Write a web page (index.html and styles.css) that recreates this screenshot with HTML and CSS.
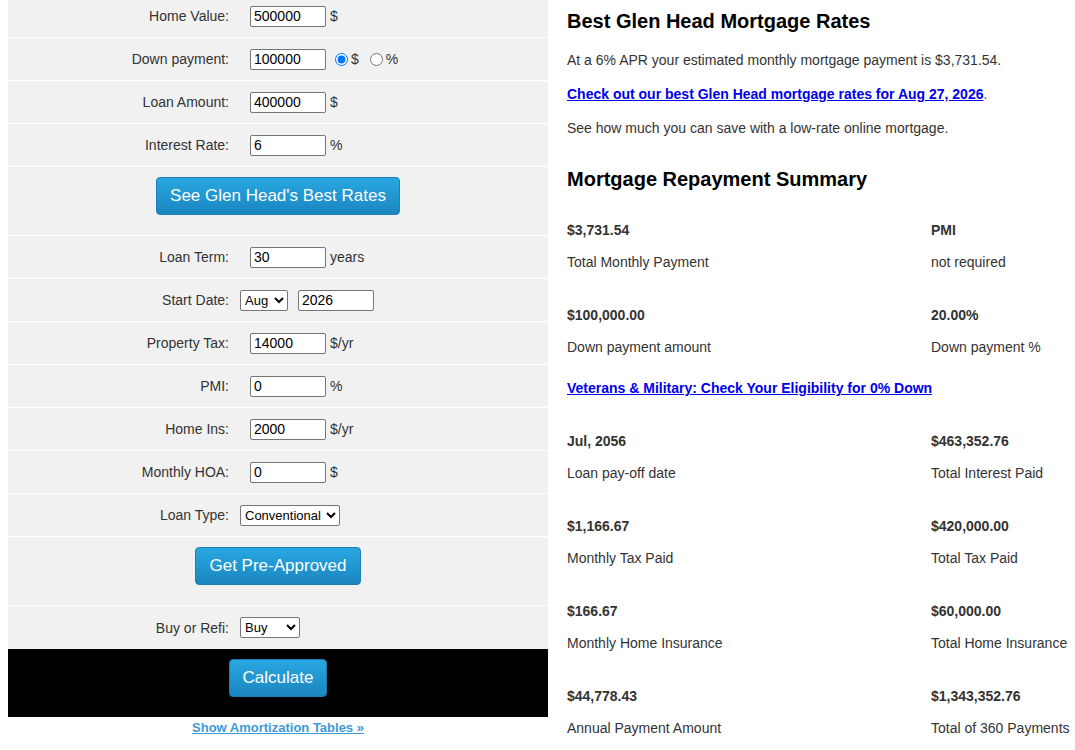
FILE: index.html
```html
<!DOCTYPE html>
<html lang="en">
<head>
<meta charset="utf-8">
<title>Glen Head Mortgage Calculator</title>
<link rel="stylesheet" href="styles.css">
</head>
<body>
<div class="page">
  <div class="calc">
    <form class="form">
      <div class="row first">
        <label class="lbl">Home Value:</label>
        <div class="val"><input class="txt" type="text" value="500000"><span class="unit">$</span></div>
      </div>
      <div class="row">
        <label class="lbl">Down payment:</label>
        <div class="val"><input class="txt" type="text" value="100000"><input class="radio" type="radio" name="dp" checked><span class="runit">$</span><input class="radio" type="radio" name="dp"><span class="runit">%</span></div>
      </div>
      <div class="row">
        <label class="lbl">Loan Amount:</label>
        <div class="val"><input class="txt" type="text" value="400000"><span class="unit">$</span></div>
      </div>
      <div class="row">
        <label class="lbl">Interest Rate:</label>
        <div class="val"><input class="txt" type="text" value="6"><span class="unit">%</span></div>
      </div>
      <div class="btnrow">
        <button type="button" class="btn">See Glen Head's Best Rates</button>
      </div>
      <div class="row">
        <label class="lbl">Loan Term:</label>
        <div class="val"><input class="txt" type="text" value="30"><span class="unit">years</span></div>
      </div>
      <div class="row">
        <label class="lbl">Start Date:</label>
        <div class="val"><select class="sel sel-month"><option>Aug</option></select><input class="txt" type="text" value="2026"></div>
      </div>
      <div class="row">
        <label class="lbl">Property Tax:</label>
        <div class="val"><input class="txt" type="text" value="14000"><span class="unit">$/yr</span></div>
      </div>
      <div class="row">
        <label class="lbl">PMI:</label>
        <div class="val"><input class="txt" type="text" value="0"><span class="unit">%</span></div>
      </div>
      <div class="row">
        <label class="lbl">Home Ins:</label>
        <div class="val"><input class="txt" type="text" value="2000"><span class="unit">$/yr</span></div>
      </div>
      <div class="row">
        <label class="lbl">Monthly HOA:</label>
        <div class="val"><input class="txt" type="text" value="0"><span class="unit">$</span></div>
      </div>
      <div class="row">
        <label class="lbl">Loan Type:</label>
        <div class="val"><select class="sel sel-type"><option>Conventional</option></select></div>
      </div>
      <div class="btnrow">
        <button type="button" class="btn">Get Pre-Approved</button>
      </div>
      <div class="row last">
        <label class="lbl">Buy or Refi:</label>
        <div class="val"><select class="sel sel-buy"><option>Buy</option></select></div>
      </div>
      <div class="calcrow">
        <button type="button" class="btn">Calculate</button>
      </div>
    </form>
    <div class="amort"><a href="#">Show Amortization Tables »</a></div>
  </div>

  <div class="results">
    <h2 class="title">Best Glen Head Mortgage Rates</h2>
    <p>At a 6% APR your estimated monthly mortgage payment is $3,731.54.</p>
    <p><a class="blue" href="#">Check out our best Glen Head mortgage rates for Aug 27, 2026</a>.</p>
    <p>See how much you can save with a low-rate online mortgage.</p>
    <h2 class="title summary">Mortgage Repayment Summary</h2>
    <div class="grid">
      <div class="item"><div class="num">$3,731.54</div><div class="desc">Total Monthly Payment</div></div>
      <div class="item"><div class="num">PMI</div><div class="desc">not required</div></div>
      <div class="item"><div class="num">$100,000.00</div><div class="desc">Down payment amount</div></div>
      <div class="item"><div class="num">20.00%</div><div class="desc">Down payment %</div></div>
    </div>
    <p class="vet"><a class="blue" href="#">Veterans &amp; Military: Check Your Eligibility for 0% Down</a></p>
    <div class="grid">
      <div class="item"><div class="num">Jul, 2056</div><div class="desc">Loan pay-off date</div></div>
      <div class="item"><div class="num">$463,352.76</div><div class="desc">Total Interest Paid</div></div>
      <div class="item"><div class="num">$1,166.67</div><div class="desc">Monthly Tax Paid</div></div>
      <div class="item"><div class="num">$420,000.00</div><div class="desc">Total Tax Paid</div></div>
      <div class="item"><div class="num">$166.67</div><div class="desc">Monthly Home Insurance</div></div>
      <div class="item"><div class="num">$60,000.00</div><div class="desc">Total Home Insurance</div></div>
      <div class="item"><div class="num">$44,778.43</div><div class="desc">Annual Payment Amount</div></div>
      <div class="item"><div class="num">$1,343,352.76</div><div class="desc">Total of 360 Payments</div></div>
    </div>
  </div>
</div>
</body>
</html>
```

FILE: styles.css
```css
html, body {
  margin: 0;
  padding: 0;
  background: #ffffff;
}
body {
  margin: 0 0 0 8px;
  font-family: "Liberation Sans", Arial, sans-serif;
  font-size: 14px;
  color: #333333;
  overflow: hidden;
}
.page {
  display: flex;
  align-items: flex-start;
}
.calc {
  width: 540px;
  flex: none;
}
.form {
  margin: 0;
  background: #f1f1f1;
}
.row {
  display: grid;
  grid-template-columns: 232px 1fr;
  align-items: center;
  height: 42px;
  border-bottom: 1px solid #ffffff;
}
.row.first {
  height: 32px;
  padding-bottom: 5px;
}
.row.last {
  height: 43px;
  border-bottom: 0;
}
.lbl {
  text-align: right;
  padding-right: 11px;
  line-height: 16px;
  color: #333333;
}
.val {
  display: flex;
  align-items: center;
}
.txt {
  box-sizing: border-box;
  width: 76px;
  height: 21px;
  margin: 0 0 0 10px;
  padding: 0 3px;
  border: 1px solid #767676;
  border-radius: 2px;
  background: #ffffff;
  font-family: "Liberation Sans", Arial, sans-serif;
  font-size: 14px;
  color: #000000;
}
.unit {
  margin-left: 4px;
  color: #333333;
}
.radio {
  width: 13px;
  height: 13px;
  margin: 0 3px 0 9px;
  accent-color: #0075ff;
}
.radio + .runit {
  margin-right: 2px;
}
.runit {
  color: #333333;
}
.sel {
  box-sizing: border-box;
  height: 21px;
  margin: 0;
  padding: 0;
  border: 1px solid #767676;
  border-radius: 2px;
  background: #ffffff;
  font-family: "Liberation Sans", Arial, sans-serif;
  font-size: 13px;
  color: #000000;
}
.sel-month { width: 48px; }
.sel-type { width: 100px; }
.sel-buy { width: 60px; }
.btnrow {
  display: flex;
  justify-content: center;
  align-items: flex-start;
  height: 58px;
  padding-top: 10px;
  border-bottom: 1px solid #ffffff;
}
.calcrow {
  display: flex;
  justify-content: center;
  align-items: flex-start;
  height: 58px;
  padding-top: 10px;
  background: #000000;
}
.btn {
  box-sizing: border-box;
  height: 38px;
  padding: 0 13px;
  border: 1px solid #1b7fb5;
  border-radius: 4px;
  background: linear-gradient(to bottom, #29a7e1 0%, #1a86c0 100%);
  color: #ffffff;
  font-family: "Liberation Sans", Arial, sans-serif;
  font-size: 17px;
  line-height: 36px;
  cursor: pointer;
}
.amort {
  text-align: center;
  margin-top: 2px;
  line-height: 16px;
}
.amort a {
  font-size: 13px;
  font-weight: bold;
  color: #3d9bd6;
  text-decoration: underline;
}
.results {
  flex: 1;
  padding: 9px 0 0 19px;
  min-width: 0;
}
.title {
  margin: 0 0 19px;
  font-size: 20px;
  line-height: 24px;
  font-weight: bold;
  color: #000000;
}
.title.summary {
  margin-top: 31px;
  margin-bottom: 31px;
}
.results p {
  margin: 0 0 18px;
  line-height: 16px;
  color: #333333;
}
a.blue {
  color: #0000ee;
  font-weight: bold;
  text-decoration: underline;
}
.results p.vet {
  margin: 25px 0 37px;
}
.grid {
  display: grid;
  grid-template-columns: 364px auto;
  row-gap: 37px;
}
.item {
  line-height: 16px;
  white-space: nowrap;
}
.num {
  font-weight: bold;
  color: #333333;
  margin-bottom: 16px;
}
.desc {
  color: #333333;
}
```
